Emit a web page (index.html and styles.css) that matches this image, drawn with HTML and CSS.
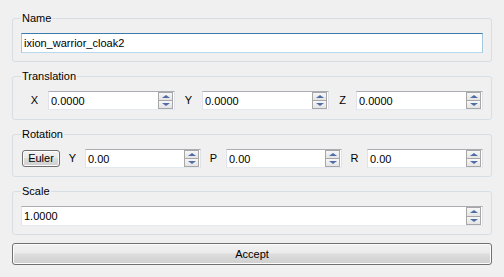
FILE: index.html
```html
<!DOCTYPE html>
<html>
<head>
<meta charset="utf-8">
<link rel="stylesheet" href="styles.css">
</head>
<body>
<div class="dialog">
  <fieldset class="group g-name">
    <legend>Name</legend>
    <input class="text focused" type="text" value="ixion_warrior_cloak2">
  </fieldset>

  <fieldset class="group g-trans">
    <legend>Translation</legend>
    <div class="row">
      <span class="lbl">X</span>
      <div class="field"><input class="val" type="text" value="0.0000"><div class="spinner"><span class="up"></span><span class="dn"></span></div></div>
      <span class="lbl">Y</span>
      <div class="field"><input class="val" type="text" value="0.0000"><div class="spinner"><span class="up"></span><span class="dn"></span></div></div>
      <span class="lbl">Z</span>
      <div class="field"><input class="val" type="text" value="0.0000"><div class="spinner"><span class="up"></span><span class="dn"></span></div></div>
    </div>
  </fieldset>

  <fieldset class="group g-rot">
    <legend>Rotation</legend>
    <div class="row">
      <button class="btn euler" type="button">Euler</button>
      <span class="lbl lbl-s">Y</span>
      <div class="field"><input class="val" type="text" value="0.00"><div class="spinner"><span class="up"></span><span class="dn"></span></div></div>
      <span class="lbl lbl-s">P</span>
      <div class="field"><input class="val" type="text" value="0.00"><div class="spinner"><span class="up"></span><span class="dn"></span></div></div>
      <span class="lbl lbl-s">R</span>
      <div class="field"><input class="val" type="text" value="0.00"><div class="spinner"><span class="up"></span><span class="dn"></span></div></div>
    </div>
  </fieldset>

  <fieldset class="group g-scale">
    <legend>Scale</legend>
    <div class="row">
      <div class="field tall"><input class="val" type="text" value="1.0000"><div class="spinner"><span class="up"></span><span class="dn"></span></div></div>
    </div>
  </fieldset>

  <button class="btn accept" type="button">Accept</button>
</div>
</body>
</html>
```

FILE: styles.css
```css
html, body {
  margin: 0;
  padding: 0;
  background: #f0f0f0;
}
body {
  font-family: "Liberation Sans", Arial, sans-serif;
  font-size: 11px;
  color: #000;
}
.dialog {
  padding: 12px 12px 0 12px;
  display: flex;
  flex-direction: column;
}
.group {
  margin: 0 0 8px 0;
  padding: 8px 8px 8px 8px;
  border: 1px solid #d5dfe5;
  border-radius: 3px;
  min-width: 0;
}
.group legend {
  padding: 0 1px;
  margin-left: 0;
  line-height: 13px;
  height: 13px;
  font-size: 11px;
}
.g-trans { padding-bottom: 9px; }
.g-rot { padding-top: 8px; }

.text {
  display: block;
  box-sizing: border-box;
  width: 100%;
  height: 20px;
  margin: 0;
  padding: 0 2px;
  font-family: "Liberation Sans", Arial, sans-serif;
  font-size: 11px;
  color: #000;
  background: #fff;
  outline: none;
  border: 1px solid #abadb3;
  border-color: #abadb3 #e2e3ea #e3e9ef #e2e3ea;
}
.text.focused {
  border-color: #3d7bad #a4c9e3 #b7d9ed #a4c9e3;
}

.row {
  display: flex;
  align-items: center;
}
.lbl {
  flex: 0 0 27px;
  text-align: center;
  line-height: 13px;
}
.lbl-s {
  flex: 0 0 25px;
}
.field {
  flex: 1 1 0;
  min-width: 0;
  box-sizing: border-box;
  height: 19px;
  display: flex;
  background: #fff;
  border: 1px solid;
  border-color: #abadb3 #e2e3ea #e3e9ef #e2e3ea;
}
.field.tall {
  height: 20px;
}
.val {
  flex: 1 1 0;
  min-width: 0;
  border: 0;
  margin: 0;
  padding: 0 2px;
  background: transparent;
  font-family: "Liberation Sans", Arial, sans-serif;
  font-size: 11px;
  color: #000;
  outline: none;
}
.spinner {
  flex: 0 0 15px;
  display: flex;
  flex-direction: column;
  margin: 0 1px 0 0;
}
.spinner span {
  flex: 1 1 0;
  box-sizing: border-box;
  border: 1px solid #a7a7a7;
  background: linear-gradient(#f7f7f7, #e4e4e4);
  display: flex;
  align-items: center;
  justify-content: center;
}
.spinner .dn {
  border-top: 0;
}
.spinner .up::before {
  content: "";
  width: 0;
  height: 0;
  border-left: 4px solid transparent;
  border-right: 4px solid transparent;
  border-bottom: 3px solid #4f6ca6;
}
.spinner .dn::before {
  content: "";
  width: 0;
  height: 0;
  border-left: 4px solid transparent;
  border-right: 4px solid transparent;
  border-top: 3px solid #4f6ca6;
}

.btn {
  box-sizing: border-box;
  margin: 0;
  padding: 0;
  font-family: "Liberation Sans", Arial, sans-serif;
  font-size: 11px;
  color: #000;
  border: 1px solid #707070;
  border-radius: 3px;
  background: linear-gradient(#f2f2f2 0%, #ebebeb 45%, #dddddd 50%, #cfcfcf 100%);
  box-shadow: inset 0 0 0 1px #fcfcfc;
}
.euler {
  flex: 0 0 38px;
  height: 17px;
  margin-left: 1px;
  line-height: 13px;
}
.accept {
  height: 22px;
  width: 100%;
  line-height: 18px;
}
```
